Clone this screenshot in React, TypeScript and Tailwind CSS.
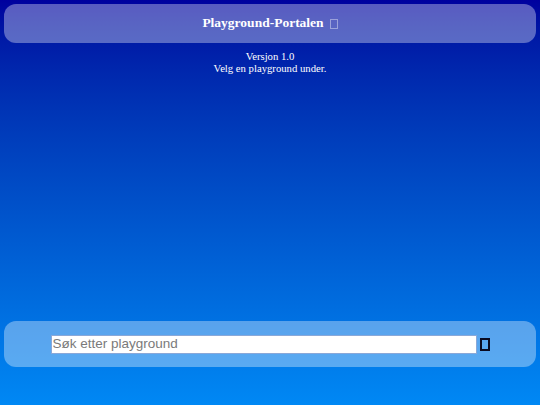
export default function App() {
  return (
    <div className="flex h-[405px] w-[540px] flex-col bg-gradient-to-b from-[#00009e] to-[#0088f4] p-1 font-['Liberation_Serif',serif] text-white">
      <header className="flex h-[39px] items-center justify-center rounded-xl bg-white/35">
        <h1 className="flex items-center gap-[6px] text-[13.5px] font-bold">
          Playground-Portalen
          <span className="inline-block h-[10px] w-[8px] border border-white/40" />
        </h1>
      </header>

      <div className="mt-[7px] text-center text-[10.7px] leading-[12px]">
        <p>Versjon 1.0</p>
        <p>Velg en playground under.</p>
      </div>

      <div className="flex-1" />

      <div className="mb-[34px] flex h-[46px] items-center justify-center gap-[3px] rounded-xl bg-white/35">
        <input
          type="text"
          placeholder="Søk etter playground"
          className="h-[19px] w-[426px] border border-[#8aa8d8] bg-white px-[1px] font-['Liberation_Sans',sans-serif] text-[13.5px] text-black placeholder:text-[#7a7a7a] outline-none"
        />
        <span className="inline-block h-[13px] w-[10px] border-2 border-[#0a0a20]" />
      </div>
    </div>
  );
}
